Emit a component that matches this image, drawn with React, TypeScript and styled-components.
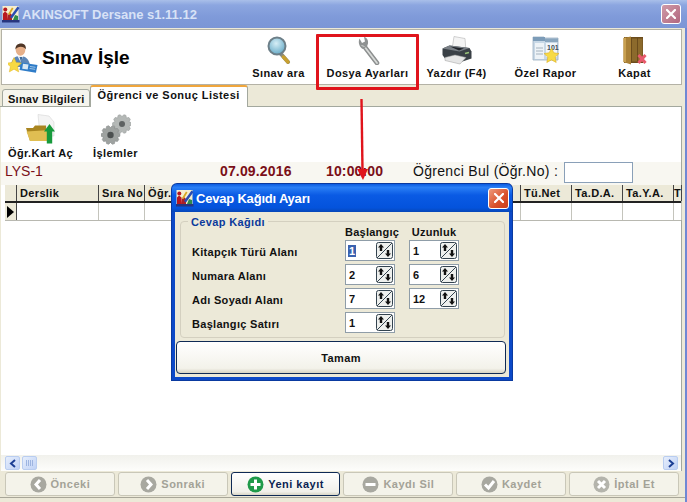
import React from 'react';
import styled, { createGlobalStyle } from 'styled-components';

const Global = createGlobalStyle`
  html, body { margin: 0; padding: 0; background: #fff; }
  * { box-sizing: border-box; }
  body { font-family: "Liberation Sans", Arial, sans-serif; }
`;

const Win = styled.div`
  position: relative;
  width: 687px;
  height: 502px;
  overflow: hidden;
  display: flex;
  flex-direction: column;
  background: #6f88d4;
`;

const TitleBar = styled.div`
  height: 28px;
  flex: none;
  display: flex;
  align-items: center;
  padding: 0 6px 0 2px;
  gap: 2px;
  background: linear-gradient(180deg, #a9bfe9 0%, #8ca6e0 18%, #7f9ad9 60%, #7c96d6 100%);
`;

const TitleText = styled.div`
  flex: 1;
  font: bold 13px "Liberation Sans", sans-serif;
  color: #d8e2f6;
`;

const CloseBtn = styled.div<{ $hot?: boolean; $size: number }>`
  width: ${(p) => p.$size}px;
  height: ${(p) => p.$size}px;
  flex: none;
  border-radius: 3px;
  border: 1px solid #fff;
  background: ${(p) => (p.$hot ? 'linear-gradient(135deg,#ee9a7c,#d9502a 60%,#c9401e)' : 'linear-gradient(135deg,#cf9aa8,#b2677f)')};
  display: flex;
  align-items: center;
  justify-content: center;
`;

const Body = styled.div`
  flex: 1;
  margin-right: 2px;
  background: #ece9d8;
  display: flex;
  flex-direction: column;
  min-height: 0;
`;

const Header = styled.div`
  height: 56px;
  flex: none;
  margin: 1px 3px 0 1px;
  background: #fff;
  border: 1px solid #b4b2a6;
  display: flex;
  align-items: stretch;
  justify-content: space-between;
  padding-right: 2px;
`;

const Heading = styled.div`
  display: flex;
  align-items: center;
  gap: 4px;
  padding: 2px 0 0 6px;
  font: bold 19px "Liberation Sans", sans-serif;
  color: #000;
`;

const Tools = styled.div`
  display: flex;
`;

const Tool = styled.div`
  width: 89px;
  display: flex;
  flex-direction: column;
  align-items: center;
  padding-top: 6px;
`;

const IconBox = styled.div<{ $h: number }>`
  height: ${(p) => p.$h}px;
  display: flex;
  align-items: flex-start;
  justify-content: center;
  flex: none;
`;

const ToolLabel = styled.div`
  font: bold 11px "Liberation Sans", sans-serif;
  letter-spacing: 0.4px;
  line-height: 13px;
  white-space: nowrap;
  color: #111;
`;

const Tabs = styled.div`
  height: 22px;
  flex: none;
  display: flex;
  align-items: flex-end;
  margin-right: 3px;
  padding-left: 2px;
  border-bottom: 1px solid #a3a89e;
`;

const Tab = styled.div<{ $active?: boolean }>`
  height: ${(p) => (p.$active ? 22 : 18)}px;
  padding: ${(p) => (p.$active ? '2px 7px 0 7px' : '3px 4px 0 5px')};
  margin-bottom: -1px;
  font: bold 11px "Liberation Sans", sans-serif;
  letter-spacing: ${(p) => (p.$active ? '0.45px' : '0.25px')};
  color: #111;
  background: ${(p) => (p.$active ? '#fff' : '#f6f5ee')};
  border: 1px solid #a3a89e;
  border-bottom: ${(p) => (p.$active ? 'none' : '1px solid #a3a89e')};
  border-top: ${(p) => (p.$active ? '2px solid #f0a63c' : '1px solid #a3a89e')};
  border-radius: 3px 3px 0 0;
`;

const Panel = styled.div`
  flex: 1;
  min-height: 0;
  background: #fff;
  margin: 0 3px 0 1px;
  border-right: 1px solid #a3a89e;
  display: flex;
  flex-direction: column;
`;

const SubTools = styled.div`
  height: 55px;
  flex: none;
  display: flex;
  padding: 7px 0 0 1px;
`;

const SubTool = styled.div<{ $w: number }>`
  width: ${(p) => p.$w}px;
  display: flex;
  flex-direction: column;
  align-items: center;
`;

const InfoRow = styled.div`
  height: 23px;
  flex: none;
  display: grid;
  grid-template-columns: 215px 106px 87px 151px 70px;
  align-items: start;
  background: #f8f7f1;
  padding-left: 4px;
  font-size: 14px;
  line-height: 18px;
`;

const Maroon = styled.div<{ $bold?: boolean }>`
  color: #7a0f18;
  font-weight: ${(p) => (p.$bold ? 700 : 400)};
  white-space: nowrap;
  letter-spacing: ${(p) => (p.$bold ? '0.15px' : '0')};
`;

const FindLabel = styled.div`
  color: #111;
  white-space: nowrap;
  font-size: 14px;
  letter-spacing: 0.3px;
`;

const FindInput = styled.div`
  width: 69px;
  height: 21px;
  background: #fff;
  border: 1px solid #8aa0b8;
`;

const GridHead = styled.div`
  height: 18px;
  flex: none;
  display: flex;
  margin-left: 4px;
  background: #ece9d8;
  border-bottom: 2px solid #222;
`;

const HeadCell = styled.div<{ $w: number; $pad?: number }>`
  width: ${(p) => p.$w}px;
  flex: none;
  padding-left: ${(p) => p.$pad ?? 3}px;
  font: bold 11px "Liberation Sans", sans-serif;
  letter-spacing: 0.35px;
  line-height: 16px;
  color: #111;
  border-right: 1px solid #444;
  overflow: hidden;
  white-space: nowrap;
`;

const GridRow = styled.div`
  height: 18px;
  flex: none;
  display: flex;
  margin-left: 4px;
  border-bottom: 1px solid #b8b8b0;
`;

const RowCell = styled.div<{ $w: number }>`
  width: ${(p) => p.$w}px;
  flex: none;
  border-right: 1px solid #c4c4bc;
`;

const Indicator = styled(RowCell)`
  background: #ece9d8;
  border-right: 1px solid #444;
  display: flex;
  align-items: center;
  padding-left: 2px;
`;

const Spacer = styled.div`
  flex: 1;
`;

const HScroll = styled.div`
  height: 16px;
  flex: none;
  display: flex;
  align-items: stretch;
  padding: 1px 3px 0 4px;
  background: linear-gradient(180deg, #f1f1ec, #fdfdfb);
  justify-content: space-between;
`;

const ScrollLeft = styled.div`
  display: flex;
  gap: 2px;
`;

const ScrollBtn = styled.div`
  width: 15px;
  height: 14px;
  border: 1px solid #b9cdf0;
  border-radius: 2px;
  background: linear-gradient(135deg, #e6eefc, #c0d2f5);
  display: flex;
  align-items: center;
  justify-content: center;
`;

const Footer = styled.div`
  height: 27px;
  flex: none;
  margin-bottom: 4px;
  display: flex;
  gap: 3px;
  padding: 1px 6px 0 5px;
  border-bottom: 1px solid #a8a698;
`;

const NavBtn = styled.div<{ $on?: boolean }>`
  flex: 1;
  height: 24px;
  display: flex;
  align-items: center;
  justify-content: center;
  gap: 4px;
  border-radius: 3px;
  font: bold 11px "Liberation Sans", sans-serif;
  letter-spacing: 0.5px;
  color: ${(p) => (p.$on ? '#0b1f52' : '#a3a297')};
  border: 1px solid ${(p) => (p.$on ? '#0f2a55' : '#c9c7b8')};
  background: ${(p) => (p.$on ? 'linear-gradient(180deg,#fff,#f1f0ea 85%,#d8d5c6)' : '#f4f3ea')};
`;

const Dialog = styled.div`
  position: absolute;
  left: 172px;
  top: 184px;
  width: 340px;
  height: 196px;
  display: flex;
  flex-direction: column;
  background: #0c49c8;
  border-radius: 5px 5px 0 0;
  box-shadow: 0 0 0 1px #0a3aa0;
`;

const DlgTitle = styled.div`
  height: 28px;
  flex: none;
  display: flex;
  align-items: center;
  gap: 2px;
  padding: 0 3px 0 4px;
  border-radius: 5px 5px 0 0;
  background: linear-gradient(180deg, #0b5be0 0%, #2a7ff5 12%, #0a5ae4 40%, #0453dc 85%, #0647b8 100%);
`;

const DlgText = styled.div`
  flex: 1;
  font: bold 13px "Liberation Sans", sans-serif;
  color: #fff;
  letter-spacing: -0.2px;
`;

const DlgBody = styled.div`
  flex: 1;
  margin: 0 3px 3px;
  padding: 9px 3px 0 1px;
  background: #ece9d8;
  display: flex;
  flex-direction: column;
`;

const Group = styled.div`
  position: relative;
  flex: none;
  margin-left: 4px;
  width: 325px;
  height: 117px;
  padding: 4px 0 0 11px;
  border: 1px solid #d4d0c0;
  border-radius: 4px;
  display: grid;
  grid-template-columns: 153px 50px 14px 50px;
  grid-template-rows: 14px repeat(4, 24px);
`;

const Legend = styled.div`
  position: absolute;
  left: 7px;
  top: -6px;
  padding: 0 3px;
  background: #ece9d8;
  font: bold 11px "Liberation Sans", sans-serif;
  letter-spacing: 0.35px;
  line-height: 13px;
  color: #0a3a9c;
`;

const ColHead = styled.div<{ $col: number }>`
  grid-column: ${(p) => p.$col};
  grid-row: 1;
  font: bold 11px "Liberation Sans", sans-serif;
  letter-spacing: 0.25px;
  line-height: 13px;
  text-align: center;
  white-space: nowrap;
  color: #111;
`;

const FieldLabel = styled.div<{ $row: number }>`
  grid-column: 1;
  grid-row: ${(p) => p.$row};
  padding-top: 6px;
  font: bold 11px "Liberation Sans", sans-serif;
  letter-spacing: 0.3px;
  color: #111;
  white-space: nowrap;
`;

const Spin = styled.div<{ $col: number; $row: number }>`
  grid-column: ${(p) => p.$col};
  grid-row: ${(p) => p.$row};
  width: 50px;
  height: 21px;
  background: #fff;
  border: 1px solid #8f9da8;
  display: flex;
  align-items: center;
  justify-content: space-between;
  padding: 0 1px 0 2px;
  font: bold 11px "Liberation Sans", sans-serif;
  color: #111;
`;

const SpinValue = styled.span<{ $sel?: boolean }>`
  padding: 0 1px;
  background: ${(p) => (p.$sel ? '#3a62b0' : 'transparent')};
  color: ${(p) => (p.$sel ? '#fff' : '#111')};
`;

const OkButton = styled.div`
  height: 33px;
  margin-top: 3px;
  display: flex;
  align-items: center;
  justify-content: center;
  font: bold 11px "Liberation Sans", sans-serif;
  letter-spacing: 0.4px;
  color: #111;
  border: 1px solid #0f2a55;
  border-radius: 4px;
  background: linear-gradient(180deg, #fff, #f3f2ea 85%, #d6d3c4);
`;

const Highlight = styled.div`
  position: absolute;
  left: 316px;
  top: 34px;
  width: 103px;
  height: 56px;
  border: 3px solid #e0141c;
  border-radius: 1px;
`;

const Arrow = styled.svg`
  position: absolute;
  left: 355px;
  top: 99px;
`;

const CloseX = ({ s = 10 }: { s?: number }) => (
  <svg width={s} height={s} viewBox="0 0 10 10">
    <path d="M1 1 9 9M9 1 1 9" stroke="#fff" strokeWidth="2.2" strokeLinecap="square" />
  </svg>
);

const AppGlyph = () => (
  <svg width="18" height="18" viewBox="0 0 18 18">
    <rect x="0.500" y="1" width="16" height="15" fill="#f6edd0" />
    <rect x="0" y="15" width="17.500" height="2.500" fill="#27357e" />
    <path d="M1 15V8.500L3 6.500l2.500 2L6 15z" fill="#b8181f" />
    <circle cx="3.300" cy="4.500" r="2" fill="#b8181f" />
    <path d="M6 15V10l2-2 2 2v5z" fill="#a82027" />
    <path d="M8 12 15.500 1.500 17.500 3 10 13.500z" fill="#2a4cb2" />
    <path d="M6 9 10 2.500l1.500 1L7.500 10z" fill="#d8a820" />
    <path d="M11 15l2-5 3 1v4z" fill="#2e8a4a" />
  </svg>
);

const PersonIcon = () => (
  <svg width="30" height="30" viewBox="0 0 30 30">
    <path d="M3 24c0-8 4-11 9-11s10 3 10 11z" fill="#5b86b8" />
    <path d="M9.500 13l3 6 3-6z" fill="#f4f4f4" />
    <path d="M11.500 14l1.500 5 1.500-5z" fill="#3c6a9a" />
    <ellipse cx="12.500" cy="7" rx="4.800" ry="5.800" fill="#e6b08a" />
    <path d="M7.500 6.500C7 2.500 10 .5 13 .5s5.500 2 4.800 6c-1-2-2.500-2.800-5-2.800s-4 .8-5.300 2.800z" fill="#4f3626" />
    <path d="M13 19.500 29.500 22l-1.600 7.800L11.500 27z" fill="#2f7cc8" />
    <path d="M15 20.700l5.500.8-.8 5-5.500-.8z" fill="#d8e8f4" />
    <path d="M22 23.500l5.500.8M21.600 25.500l5.500.8" stroke="#bcd8ee" strokeWidth="0.8" />
    <path d="M6 14.500l2.200 5 5.300.6-3.900 3.500 1.100 5.300L6 26.200l-4.700 2.700 1.100-5.300L-1.500 20.100l5.300-.6z" fill="#f7da44" stroke="#e0b428" strokeWidth="0.5" />
  </svg>
);

const SearchIcon = () => (
  <svg width="24" height="28" viewBox="0 0 24 28">
    <defs>
      <radialGradient id="lens" cx="0.45" cy="0.35" r="0.7">
        <stop offset="0" stopColor="#d6eef6" />
        <stop offset="1" stopColor="#5fa6c4" />
      </radialGradient>
    </defs>
    <path d="M14 18 21 26" stroke="#8a8a7a" strokeWidth="4" strokeLinecap="round" />
    <path d="M16.500 21 21 26" stroke="#c8a030" strokeWidth="3.400" strokeLinecap="round" />
    <circle cx="10" cy="10" r="8.500" fill="url(#lens)" stroke="#6d7f88" strokeWidth="2" />
  </svg>
);

const WrenchIcon = () => (
  <svg width="24" height="29" viewBox="0 0 24 29">
    <path d="M8 10 21 27" stroke="#8c8f8f" strokeWidth="4.600" strokeLinecap="round" />
    <path d="M8 10 21 27" stroke="#d8dad8" strokeWidth="1.800" strokeLinecap="round" />
    <path d="M3.500 2.500 6 7l3-1.500L8 1c3 .6 4.500 3.500 4 6.500l-1 3-4 2.500C4 12 1.500 7 3.500 2.500z" fill="#8f9292" />
    <path d="M5.500 9.500l3 1" stroke="#d2d4d2" />
  </svg>
);

const PrinterIcon = () => (
  <svg width="31" height="29" viewBox="0 0 31 29">
    <path d="M13 0.500 24 2.500l1 13-14-2z" fill="#f4f4f4" stroke="#b4b4b4" strokeWidth="0.6" />
    <path d="M1.500 12.500 8.500 9.500l20 2.500 2 3.500v7L17 27 4 22.500 1.500 19z" fill="#3a4046" />
    <path d="M1.500 12.500 8.500 9.500l20 2.500-10 3.500z" fill="#7a8086" />
    <path d="M9 10.500l14 2-5 2z" fill="#20242a" />
    <path d="M4 21.500 14 19l11 2.500-6 6.500-15-3.500z" fill="#e6e6e6" stroke="#9c9c9c" strokeWidth="0.5" />
    <path d="M24 17.500l4-1" stroke="#9ac47a" strokeWidth="1.400" />
  </svg>
);

const ReportIcon = () => (
  <svg width="28" height="29" viewBox="0 0 28 29">
    <path d="M1 1h11l1 1h13v22H1z" fill="#c8d8e6" stroke="#9cb0c2" strokeWidth="0.8" />
    <rect x="1" y="1" width="12" height="4" fill="#7c9cb8" />
    <rect x="13" y="2.500" width="13" height="3.500" fill="#8aa6be" />
    <rect x="3" y="7" width="9" height="16" fill="#eef3f7" />
    <rect x="14" y="7" width="11" height="14" fill="#f2f6fa" />
    <text x="15" y="14" fontSize="7" fontWeight="700" fontFamily="Liberation Sans" fill="#3c4c5c">101</text>
    <path d="M4 12h7M4 15h7M4 18h7" stroke="#a4b2be" />
    <path d="M19.500 12l2.300 4.800 5.200.7-3.800 3.600 1 5.400-4.700-2.600-4.700 2.600 1-5.400L12 17.500l5.200-.7z" fill="#f7da44" stroke="#dcae28" strokeWidth="0.6" />
  </svg>
);

const DoorIcon = () => (
  <svg width="24" height="29" viewBox="0 0 24 29">
    <rect x="1" y="1" width="19" height="26" fill="#6b4c1c" />
    <path d="M0.500 2 8 .5v28L.5 26z" fill="#a98036" />
    <path d="M0.500 2 3 1.500V26.500l-2.500-.5z" fill="#c8a050" />
    <rect x="9" y="2.500" width="5" height="23" fill="#8c6a2c" />
    <rect x="15" y="2.500" width="4.500" height="23" fill="#8c6a2c" />
    <path d="M15.500 19 22.500 27M22.500 19 15.500 27" stroke="#e85a6c" strokeWidth="3" />
  </svg>
);

const FolderIcon = () => (
  <svg width="32" height="30" viewBox="0 0 32 30">
    <path d="M13 .5 24 2l5 6v14H15z" fill="#f4f4f4" stroke="#cfcfcf" strokeWidth="0.5" />
    <path d="M1 14h7l2-2.500h11L22 27H5z" fill="#a98520" />
    <path d="M1.500 17.500 25 16l-3 11H5z" fill="#e0be52" />
    <path d="M24.500 10l5.500 7.500h-2.800v12h-5.400v-12H19z" fill="#179a3c" />
  </svg>
);

// dis sayisina gore disli konturu
const gearPath = (cx: number, cy: number, r: number, teeth = 10) => {
  const pts: string[] = [];
  for (let i = 0; i < teeth; i++) {
    const a = (i / teeth) * Math.PI * 2;
    const step = (Math.PI * 2) / teeth;
    [
      [r - 2, a - step * 0.5],
      [r, a - step * 0.2],
      [r, a + step * 0.2],
      [r - 2, a + step * 0.5],
    ].forEach(([rad, ang]) => pts.push(`${(cx + rad * Math.cos(ang)).toFixed(1)},${(cy + rad * Math.sin(ang)).toFixed(1)}`));
  }
  return `M${pts.join('L')}z`;
};

const GearsIcon = () => (
  <svg width="30" height="32" viewBox="0 0 30 32">
    <path d={gearPath(21, 10, 9.500)} fill="#b4b8b6" stroke="#8c9090" strokeWidth="0.5" />
    <circle cx="21" cy="10" r="3" fill="#5e6262" />
    <path d={gearPath(9.500, 21, 9.500)} fill="#9ea2a0" stroke="#7c8080" strokeWidth="0.5" />
    <circle cx="9.500" cy="21" r="3.200" fill="#4c5050" />
  </svg>
);

const SpinIcon = () => (
  <svg width="17" height="17" viewBox="0 0 17 17">
    <rect x="0.500" y="0.500" width="16" height="16" rx="2" fill="#eef0ee" stroke="#33434f" />
    <path d="M1 16 16 1" stroke="#33434f" />
    <path d="M5 2 8 5.500H6.200V9H3.800V5.500H2zM12 15l-3-3.500h1.800V8h2.400v3.500H15z" fill="#111" />
  </svg>
);

const RoundIcon = ({ color, d }: { color: string; d: string }) => (
  <svg width="17" height="17" viewBox="0 0 17 17">
    <circle cx="8.500" cy="8.500" r="8" fill={color} />
    <path d={d} stroke="#fff" strokeWidth="3" fill="none" />
  </svg>
);

const toolbar = [
  { label: 'Sınav ara', icon: <SearchIcon /> },
  { label: 'Dosya Ayarları', icon: <WrenchIcon /> },
  { label: 'Yazdır (F4)', icon: <PrinterIcon /> },
  { label: 'Özel Rapor', icon: <ReportIcon /> },
  { label: 'Kapat', icon: <DoorIcon /> },
];

const columns: [string, number][] = [
  ['', 12],
  ['Derslik', 82],
  ['Sıra No', 46],
  ['Öğr.', 229],
  ['', 147],
  ['Tü.Net', 51],
  ['Ta.D.A.', 51],
  ['Ta.Y.A.', 51],
  ['T', 8],
];

const fields = [
  { label: 'Kitapçık Türü Alanı', a: '1', b: '1', sel: true },
  { label: 'Numara Alanı', a: '2', b: '6' },
  { label: 'Adı Soyadı Alanı', a: '7', b: '12' },
  { label: 'Başlangıç Satırı', a: '1' },
];

const buttons = [
  { label: 'Önceki', color: '#a8a8a0', d: 'M10 4 6 8.500l4 4.500' },
  { label: 'Sonraki', color: '#a8a8a0', d: 'M7 4l4 4.500L7 13' },
  { label: 'Yeni kayıt', color: '#1f9a4a', d: 'M8.500 3.500v10M3.500 8.500h10', on: true },
  { label: 'Kaydı Sil', color: '#a8a8a0', d: 'M3.500 8.500h10' },
  { label: 'Kaydet', color: '#a8a8a0', d: 'M4 8.500l3.500 3.500L13 5' },
  { label: 'İptal Et', color: '#b4b4ac', d: 'M5 5l7 7M12 5l-7 7' },
];

export default function App() {
  return (
    <Win>
      <Global />
      <TitleBar>
        <AppGlyph />
        <TitleText>AKINSOFT Dersane s1.11.12</TitleText>
        <CloseBtn $size={20}>
          <CloseX />
        </CloseBtn>
      </TitleBar>
      <Body>
        <Header>
          <Heading>
            <PersonIcon />
            Sınav İşle
          </Heading>
          <Tools>
            {toolbar.map((t) => (
              <Tool key={t.label}>
                <IconBox $h={31}>{t.icon}</IconBox>
                <ToolLabel>{t.label}</ToolLabel>
              </Tool>
            ))}
          </Tools>
        </Header>
        <Tabs>
          <Tab>Sınav Bilgileri</Tab>
          <Tab $active>Öğrenci ve Sonuç Listesi</Tab>
        </Tabs>
        <Panel>
          <SubTools>
            <SubTool $w={77}>
              <IconBox $h={33}>
                <FolderIcon />
              </IconBox>
              <ToolLabel>Öğr.Kart Aç</ToolLabel>
            </SubTool>
            <SubTool $w={73}>
              <IconBox $h={33}>
                <GearsIcon />
              </IconBox>
              <ToolLabel>İşlemler</ToolLabel>
            </SubTool>
          </SubTools>
          <InfoRow>
            <Maroon>LYS-1</Maroon>
            <Maroon $bold>07.09.2016</Maroon>
            <Maroon $bold>10:00:00</Maroon>
            <FindLabel>Öğrenci Bul (Öğr.No) :</FindLabel>
            <FindInput />
          </InfoRow>
          <GridHead>
            {columns.map(([c, w], i) => (
              <HeadCell key={i} $w={w} $pad={c === 'T' ? 0 : 3}>
                {c}
              </HeadCell>
            ))}
          </GridHead>
          <GridRow>
            {columns.map(([, w], i) =>
              i === 0 ? (
                <Indicator key={i} $w={w}>
                  <svg width="7" height="12" viewBox="0 0 7 12">
                    <path d="M0 0 7 6 0 12z" fill="#000" />
                  </svg>
                </Indicator>
              ) : (
                <RowCell key={i} $w={w} />
              ),
            )}
          </GridRow>
          <Spacer />
          <HScroll>
            <ScrollLeft>
              <ScrollBtn>
                <svg width="8" height="9" viewBox="0 0 8 9">
                  <path d="M6 1 2 4.500 6 8" stroke="#1c3f94" strokeWidth="2" fill="none" />
                </svg>
              </ScrollBtn>
              <ScrollBtn>
                <svg width="7" height="6" viewBox="0 0 7 6">
                  <path d="M.5 0v6M2.500 0v6M4.500 0v6M6.500 0v6" stroke="#9db4e0" />
                </svg>
              </ScrollBtn>
            </ScrollLeft>
            <ScrollBtn>
              <svg width="8" height="9" viewBox="0 0 8 9">
                <path d="M2 1l4 3.500L2 8" stroke="#1c3f94" strokeWidth="2" fill="none" />
              </svg>
            </ScrollBtn>
          </HScroll>
        </Panel>
        <Footer>
          {buttons.map((b) => (
            <NavBtn key={b.label} $on={b.on}>
              <RoundIcon color={b.color} d={b.d} />
              {b.label}
            </NavBtn>
          ))}
        </Footer>
      </Body>

      <Highlight />
      <Arrow width="14" height="82" viewBox="0 0 14 82">
        <path d="M6.500 0 7.500 72" stroke="#e0141c" strokeWidth="2.400" />
        <path d="M2 70h11l-5 11z" fill="#e0141c" />
      </Arrow>

      <Dialog>
        <DlgTitle>
          <AppGlyph />
          <DlgText>Cevap Kağıdı Ayarı</DlgText>
          <CloseBtn $hot $size={21}>
            <CloseX />
          </CloseBtn>
        </DlgTitle>
        <DlgBody>
          <Group>
            <Legend>Cevap Kağıdı</Legend>
            <ColHead $col={2}>Başlangıç</ColHead>
            <ColHead $col={4}>Uzunluk</ColHead>
            {fields.map((f, i) => (
              <React.Fragment key={f.label}>
                <FieldLabel $row={i + 2}>{f.label}</FieldLabel>
                <Spin $col={2} $row={i + 2}>
                  <SpinValue $sel={f.sel}>{f.a}</SpinValue>
                  <SpinIcon />
                </Spin>
                {f.b && (
                  <Spin $col={4} $row={i + 2}>
                    <SpinValue>{f.b}</SpinValue>
                    <SpinIcon />
                  </Spin>
                )}
              </React.Fragment>
            ))}
          </Group>
          <OkButton>Tamam</OkButton>
        </DlgBody>
      </Dialog>
    </Win>
  );
}
